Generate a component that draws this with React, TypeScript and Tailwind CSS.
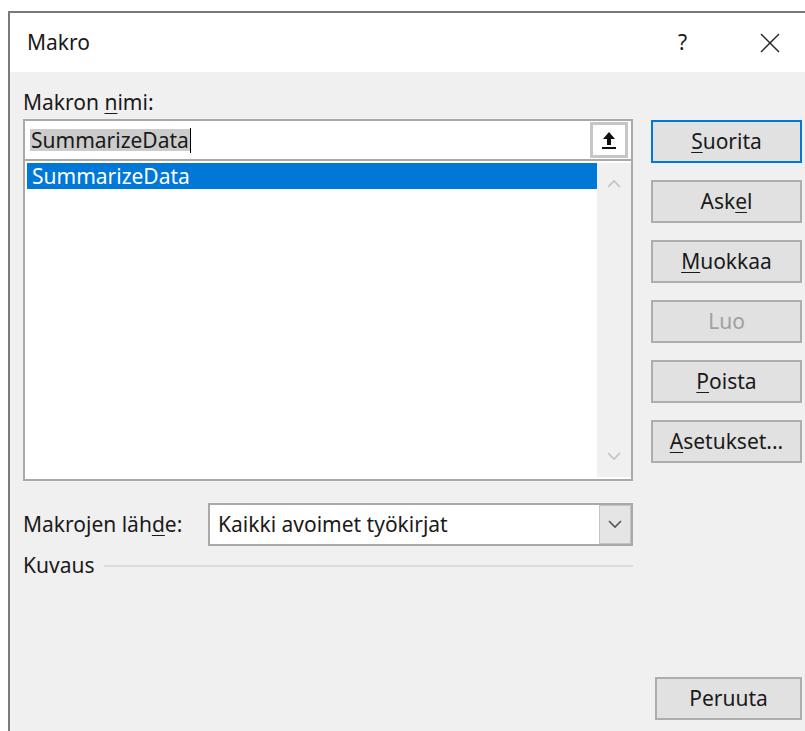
import React from 'react';

const font = { fontFamily: '"Noto Sans", "Open Sans", sans-serif' };

// button with an underlined access key letter
const DlgButton: React.FC<{
  pre?: string;
  hot?: string;
  post?: string;
  primary?: boolean;
  disabled?: boolean;
  className?: string;
}> = ({ pre = '', hot = '', post = '', primary, disabled, className = 'w-[151px]' }) => (
  <div
    className={`h-[43px] flex items-center justify-center bg-[#e1e1e1] text-[21px] ${className} ${
      primary ? 'border-2 border-[#0078d7]' : 'border-2 border-[#adadad]'
    } ${disabled ? 'text-[#a0a0a0]' : 'text-[#1a1a1a]'}`}
  >
    <span>
      {pre}
      {hot && <span className="underline underline-offset-[3px] decoration-1">{hot}</span>}
      {post}
    </span>
  </div>
);

const Chevron: React.FC<{ up?: boolean; color?: string }> = ({ up, color = '#c2c2c2' }) => (
  <svg width="14" height="9" viewBox="0 0 14 9">
    <path
      d={up ? 'M1 8 L7 2 L13 8' : 'M1 1 L7 7 L13 1'}
      fill="none"
      stroke={color}
      strokeWidth="1.6"
    />
  </svg>
);

export default function App() {
  return (
    <div className="w-[805px] h-[731px] bg-white pt-[11px] pl-[8px] overflow-hidden" style={font}>
      <div className="h-[720px] border-l-[2px] border-t-[2px] border-[#7a7a7a] flex flex-col">
        {/* title bar */}
        <div className="h-[59px] bg-white flex items-center pl-[17px] text-[21px] text-[#1a1a1a]">
          <span>Makro</span>
          <span className="ml-auto mr-[73px] text-[21px]">?</span>
          <svg width="20" height="20" viewBox="0 0 20 20" className="mr-[25px]">
            <path d="M1 1 L19 19 M19 1 L1 19" stroke="#222" strokeWidth="1.4" />
          </svg>
        </div>

        {/* body */}
        <div className="flex-1 bg-[#f0f0f0] flex text-[21px] text-[#1a1a1a]">
          <div className="ml-[13px] w-[610px] flex flex-col">
            <div className="mt-[15px] h-[30px] leading-[30px]">
              Makron <span className="underline underline-offset-[3px] decoration-1">n</span>imi:
            </div>
            <div className="mt-[2px] h-[40px] border-2 border-b-0 border-[#a9a9a9] bg-white flex items-center pl-[5px] pr-[3px]">
              <span className="bg-[#cccccc] h-[22px] leading-[22px] px-[1px]">SummarizeData</span>
              <span className="w-[1px] h-[25px] bg-black" />
              <div className="ml-auto w-[38px] h-[36px] border-[3px] border-[#c6c6c6] bg-white flex items-center justify-center">
                <svg width="16" height="18" viewBox="0 0 16 18">
                  <path d="M8 1 L14 8 L10 8 L10 14 L6 14 L6 8 L2 8 Z" fill="#111" />
                  <rect x="1" y="16" width="14" height="2" fill="#111" />
                </svg>
              </div>
            </div>
            <div className="h-[322px] border-2 border-[#a9a9a9] bg-white flex p-[2px] pr-0">
              <div className="flex-1">
                <div className="h-[26px] bg-[#0078d7] text-white leading-[26px] pl-[5px]">SummarizeData</div>
              </div>
              <div className="w-[34px] bg-[#f0f0f0] flex flex-col items-center justify-between py-[16px]">
                <Chevron up />
                <Chevron />
              </div>
            </div>

            <div className="mt-[22px] flex items-center h-[43px]">
              <span className="w-[185px]">
                Makrojen läh<span className="underline underline-offset-[3px] decoration-1">d</span>e:
              </span>
              <div className="flex-1 h-[43px] border-2 border-[#a9a9a9] bg-white flex items-center pl-[8px]">
                <span>Kaikki avoimet työkirjat</span>
                <div className="ml-auto w-[32px] h-[39px] bg-[#e5e5e5] border border-[#c4c4c4] flex items-center justify-center">
                  <Chevron color="#555" />
                </div>
              </div>
            </div>

            <div className="mt-[5px] flex items-center h-[30px]">
              <span>Kuvaus</span>
              <div className="flex-1 ml-[10px] h-[2px] bg-[#dcdcdc]" />
            </div>
          </div>

          {/* command buttons */}
          <div className="ml-[18px] mr-[3px] flex-1 flex flex-col pt-[48px] pb-[11px]">
            <div className="flex flex-col gap-[17px]">
              <DlgButton hot="S" post="uorita" primary />
              <DlgButton pre="Ask" hot="e" post="l" />
              <DlgButton hot="M" post="uokkaa" />
              <DlgButton pre="Luo" disabled />
              <DlgButton hot="P" post="oista" />
              <DlgButton hot="A" post="setukset..." />
            </div>
            <DlgButton pre="Peruuta" className="w-[147px] self-end mt-auto" />
          </div>
        </div>
      </div>
    </div>
  );
}
